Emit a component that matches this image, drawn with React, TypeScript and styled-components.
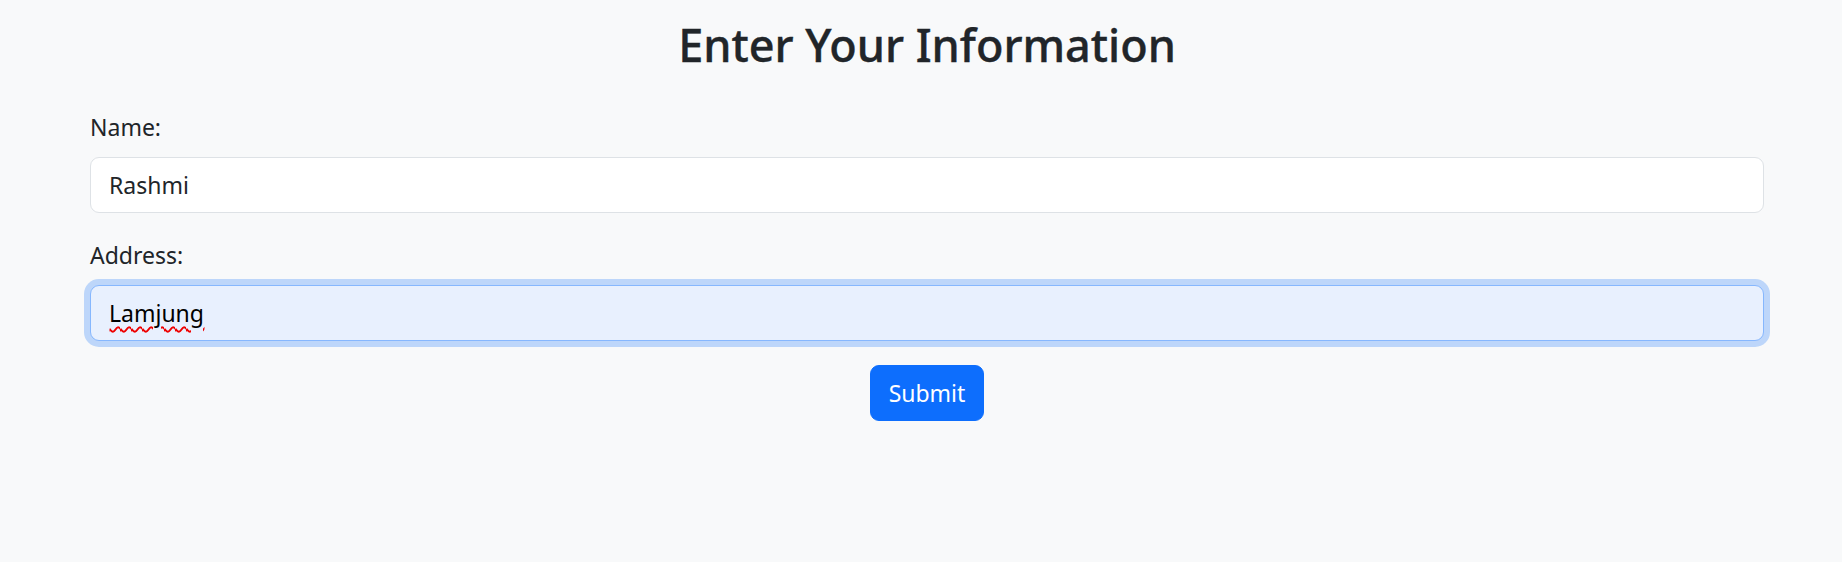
import React, { useState } from 'react'
import styled, { createGlobalStyle } from 'styled-components'

const GlobalStyle = createGlobalStyle`
  html, body {
    margin: 0;
    padding: 0;
    background: #f8f9fa;
  }

  body {
    font-family: "Noto Sans", "Open Sans", sans-serif;
    color: #212529;
  }
`

export default function App() {
  const [name, setName] = useState('Rashmi')
  const [address, setAddress] = useState('Lamjung')

  return (
    <>
      <GlobalStyle />
      <Page>
        <Title>Enter Your Information</Title>
        <Form onSubmit={(e) => e.preventDefault()}>
          <Group>
            <Label htmlFor="name">Name:</Label>
            <FieldWrap>
              <Input id="name" value={name} onChange={(e) => setName(e.target.value)} />
            </FieldWrap>
          </Group>
          <Group>
            <Label htmlFor="address">Address:</Label>
            <FieldWrap>
              <Input
                id="address"
                $focused
                value={address}
                onChange={(e) => setAddress(e.target.value)}
              />
              <Squiggle aria-hidden>{address}</Squiggle>
            </FieldWrap>
          </Group>
          <Actions>
            <SubmitButton type="submit">Submit</SubmitButton>
          </Actions>
        </Form>
      </Page>
    </>
  )
}

const Page = styled.div`
  display: flex;
  flex-direction: column;
  min-height: 562px;
  padding: 0 78px 0 90px;
  box-sizing: border-box;
`

const Title = styled.h2`
  margin: 16px 0 0;
  font-size: 45px;
  font-weight: 500;
  line-height: 58px;
  text-align: center;
  color: #212529;
  -webkit-text-stroke: 0.4px #212529;
`

const Form = styled.form`
  display: flex;
  flex-direction: column;
  margin-top: 35px;
`

const Group = styled.div`
  display: flex;
  flex-direction: column;
  margin-bottom: 24px;
`

const Label = styled.label`
  margin-bottom: 12px;
  font-size: 23px;
  line-height: 36px;
  color: #212529;
`

const FieldWrap = styled.div`
  position: relative;
  display: flex;
  height: 56px;
`

const Input = styled.input<{ $focused?: boolean }>`
  flex: 1;
  height: 56px;
  box-sizing: border-box;
  padding: 0 18px;
  font-family: inherit;
  font-size: 23px;
  color: ${({ $focused }) => ($focused ? '#000' : '#212529')};
  background: ${({ $focused }) => ($focused ? '#e8f0fe' : '#fff')};
  border: 1.5px solid ${({ $focused }) => ($focused ? '#86b7fe' : '#dee2e6')};
  border-radius: 9px;
  outline: none;
  box-shadow: ${({ $focused }) => ($focused ? '0 0 0 6px rgba(13, 110, 253, 0.25)' : 'none')};
`

const Squiggle = styled.span`
  position: absolute;
  left: 19.5px;
  top: 0;
  height: 56px;
  display: flex;
  align-items: center;
  font-size: 23px;
  color: transparent;
  text-decoration: underline wavy #e00;
  text-decoration-thickness: 1.5px;
  text-underline-offset: 4px;
  pointer-events: none;
`

const Actions = styled.div`
  display: flex;
  justify-content: center;
`

const SubmitButton = styled.button`
  height: 56px;
  padding: 0 18px;
  font-family: inherit;
  font-size: 23px;
  color: #fff;
  background: #0d6efd;
  border: 1.5px solid #0d6efd;
  border-radius: 9px;
  cursor: pointer;
`
